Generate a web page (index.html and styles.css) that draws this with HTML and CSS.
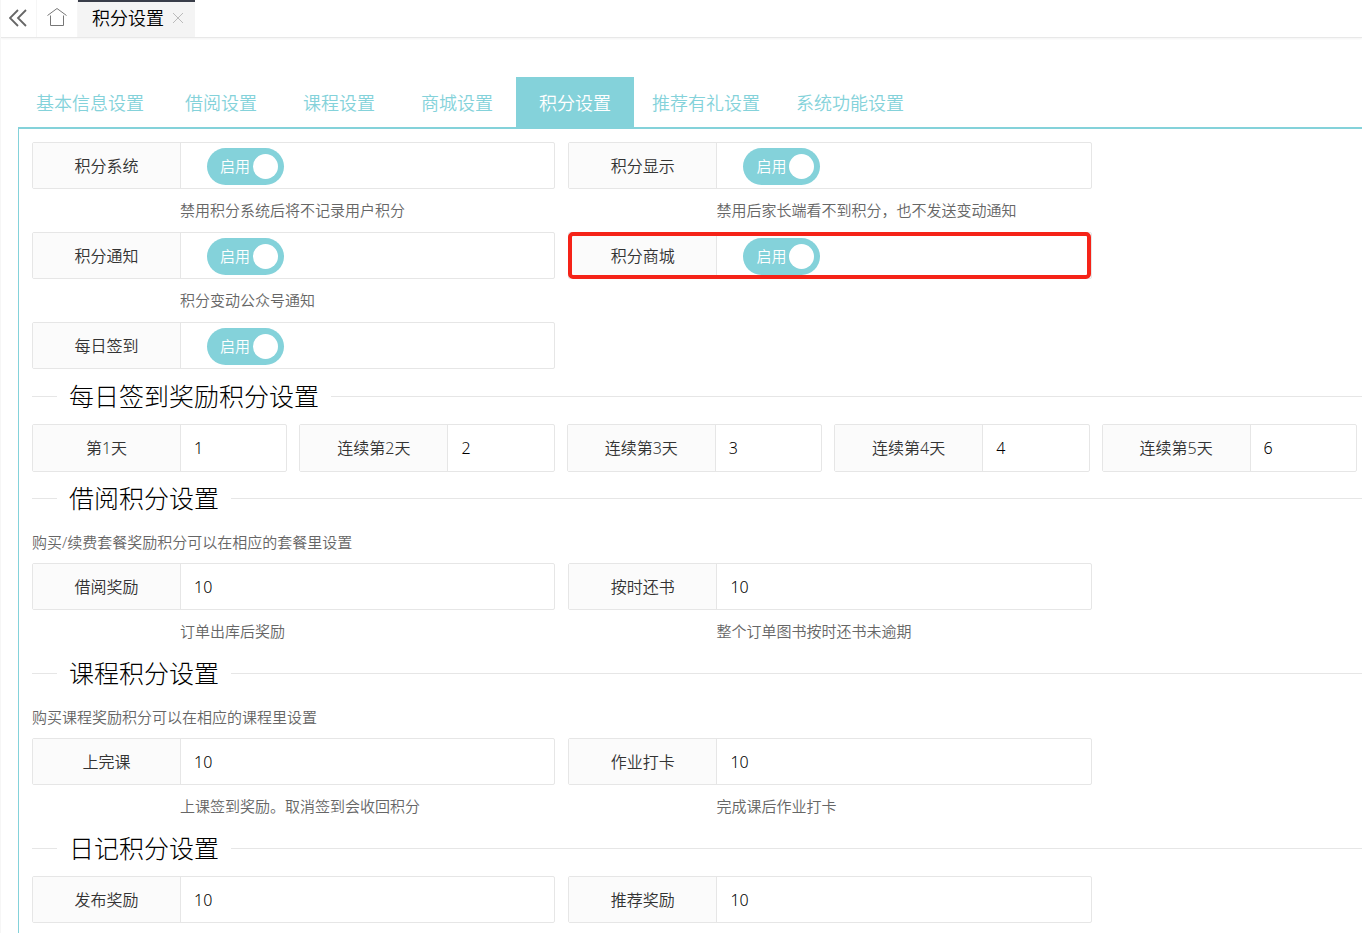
FILE: index.html
```html
<!DOCTYPE html>
<html lang="zh-CN">
<head>
<meta charset="utf-8">
<meta name="viewport" content="width=device-width, initial-scale=1">
<title>积分设置</title>
<link rel="stylesheet" href="styles.css">
</head>
<body>
<header class="topbar">
  <button class="icon-btn icon-btn-collapse" type="button" aria-label="收起菜单">
    <svg width="18" height="20" viewBox="0 0 18 20" fill="none" stroke="#666" stroke-width="1.8"><path d="M9 2L1 10l8 8M17 2L9 10l8 8"/></svg>
  </button>
  <button class="icon-btn icon-btn-home" type="button" aria-label="首页">
    <svg width="20" height="20" viewBox="0 0 20 20" fill="none" stroke="#777" stroke-width="1"><path d="M.5 8.500L10 1.500l9.500 7M3.500 8.500v10h13v-10"/></svg>
  </button>
  <div class="page-tab">
    <span>积分设置</span>
    <button class="tab-close" type="button" aria-label="关闭">
      <svg width="10" height="10" viewBox="0 0 10 10" fill="none" stroke="#bbb"><path d="M0 0l10 10M10 0L0 10"/></svg>
    </button>
  </div>
</header>
<main class="content">
  <nav class="tabs">
    <a class="tab" href="#basic">基本信息设置</a>
    <a class="tab" href="#borrow">借阅设置</a>
    <a class="tab" href="#course">课程设置</a>
    <a class="tab" href="#mall">商城设置</a>
    <a class="tab tab-active" href="#points" aria-current="page">积分设置</a>
    <a class="tab" href="#referral">推荐有礼设置</a>
    <a class="tab" href="#system">系统功能设置</a>
  </nav>
  <form class="panel">
    <div class="pairs">
      <div class="item">
        <div class="field"><label class="field-label" for="s1">积分系统</label><div class="field-body"><span class="switch"><input type="checkbox" id="s1" checked><span class="switch-text">启用</span></span></div></div>
        <p class="help">禁用积分系统后将不记录用户积分</p>
      </div>
      <div class="item">
        <div class="field"><label class="field-label" for="s2">积分显示</label><div class="field-body"><span class="switch"><input type="checkbox" id="s2" checked><span class="switch-text">启用</span></span></div></div>
        <p class="help">禁用后家长端看不到积分，也不发送变动通知</p>
      </div>
      <div class="item">
        <div class="field"><label class="field-label" for="s3">积分通知</label><div class="field-body"><span class="switch"><input type="checkbox" id="s3" checked><span class="switch-text">启用</span></span></div></div>
        <p class="help">积分变动公众号通知</p>
      </div>
      <div class="item">
        <div class="field field-marked"><label class="field-label" for="s4">积分商城</label><div class="field-body"><span class="switch"><input type="checkbox" id="s4" checked><span class="switch-text">启用</span></span></div></div>
      </div>
      <div class="item">
        <div class="field"><label class="field-label" for="s5">每日签到</label><div class="field-body"><span class="switch"><input type="checkbox" id="s5" checked><span class="switch-text">启用</span></span></div></div>
      </div>
    </div>

    <h2 class="section section-spaced">每日签到奖励积分设置</h2>
    <div class="days">
      <div class="field field-day"><label class="field-label" for="d1">第1天</label><input class="field-input" id="d1" value="1"></div>
      <div class="field field-day"><label class="field-label" for="d2">连续第2天</label><input class="field-input" id="d2" value="2"></div>
      <div class="field field-day"><label class="field-label" for="d3">连续第3天</label><input class="field-input" id="d3" value="3"></div>
      <div class="field field-day"><label class="field-label" for="d4">连续第4天</label><input class="field-input" id="d4" value="4"></div>
      <div class="field field-day"><label class="field-label" for="d5">连续第5天</label><input class="field-input" id="d5" value="6"></div>
    </div>

    <h2 class="section">借阅积分设置</h2>
    <p class="desc">购买/续费套餐奖励积分可以在相应的套餐里设置</p>
    <div class="pairs">
      <div class="item">
        <div class="field"><label class="field-label" for="b1">借阅奖励</label><input class="field-input" id="b1" value="10"></div>
        <p class="help">订单出库后奖励</p>
      </div>
      <div class="item">
        <div class="field"><label class="field-label" for="b2">按时还书</label><input class="field-input" id="b2" value="10"></div>
        <p class="help">整个订单图书按时还书未逾期</p>
      </div>
    </div>

    <h2 class="section">课程积分设置</h2>
    <p class="desc">购买课程奖励积分可以在相应的课程里设置</p>
    <div class="pairs">
      <div class="item">
        <div class="field"><label class="field-label" for="c1">上完课</label><input class="field-input" id="c1" value="10"></div>
        <p class="help">上课签到奖励。取消签到会收回积分</p>
      </div>
      <div class="item">
        <div class="field"><label class="field-label" for="c2">作业打卡</label><input class="field-input" id="c2" value="10"></div>
        <p class="help">完成课后作业打卡</p>
      </div>
    </div>

    <h2 class="section">日记积分设置</h2>
    <div class="pairs">
      <div class="item">
        <div class="field"><label class="field-label" for="n1">发布奖励</label><input class="field-input" id="n1" value="10"></div>
      </div>
      <div class="item">
        <div class="field"><label class="field-label" for="n2">推荐奖励</label><input class="field-input" id="n2" value="10"></div>
      </div>
    </div>
  </form>
</main>
</body>
</html>
```

FILE: styles.css
```css
* {
  box-sizing: border-box;
}

body {
  margin: 0;
  min-height: 100vh;
  display: flex;
  flex-direction: column;
  border-left: 1px solid #f6f6f6;
  background: #fff;
  color: #333;
  font-family: "Noto Sans", "Noto Sans CJK SC", sans-serif;
  font-weight: 350;
  font-size: 16px;
}

button,
input {
  font: inherit;
  color: inherit;
}

.topbar {
  display: flex;
  height: 38px;
  border-bottom: 1px solid #e8e8e8;
  box-shadow: 0 1px 2px rgba(0, 0, 0, 0.05);
}

.icon-btn {
  display: flex;
  align-items: center;
  justify-content: center;
  padding: 0 0 2px;
  border: 0;
  border-right: 1px solid #f6f6f6;
  background: none;
}

.icon-btn-collapse {
  width: 36px;
  padding: 0 2px 1px 0;
}

.icon-btn-home {
  width: 41px;
  padding-bottom: 4px;
}

.page-tab {
  display: flex;
  align-items: center;
  gap: 9px;
  padding: 0 12px 4px 14px;
  border-top: 2px solid #393d49;
  background: #f4f4f4;
  color: #000;
  font-size: 18px;
  line-height: 30px;
}

.tab-close {
  display: flex;
  padding: 0;
  border: 0;
  background: none;
}

.content {
  flex: 1;
  display: flex;
  flex-direction: column;
  padding: 39px 0 0 17px;
}

.tabs {
  display: flex;
  border-bottom: 2px solid #84d2da;
}

.tab {
  min-width: 118px;
  padding: 2px 18px 0;
  color: #84d2da;
  font-size: 18px;
  line-height: 48px;
  text-align: center;
  text-decoration: none;
}

.tab-active {
  background: #84d2da;
  color: #fff;
}

.panel {
  flex: 1;
  padding: 13px 0 9px 13px;
  border-left: 1px solid #84d2da;
}

.pairs {
  display: grid;
  grid-template-columns: repeat(2, 39.5%);
  column-gap: 13px;
  margin-right: 5px;
}

.days {
  display: grid;
  grid-template-columns: repeat(5, minmax(0, 1fr));
  column-gap: 12px;
  margin: 0 5px 6px 0;
}

.field {
  position: relative;
  display: flex;
  height: 47px;
  border: 1px solid #e6e6e6;
  border-radius: 2px;
}

.field-day {
  height: 48px;
}

.field-label {
  flex: none;
  display: flex;
  align-items: center;
  justify-content: center;
  width: 148px;
  padding-bottom: 2px;
  border-right: 1px solid #e6e6e6;
  background: #fbfbfb;
}

.field-body {
  display: flex;
  align-items: center;
  padding: 2px 0 0 26px;
}

.field-input {
  flex: 1;
  min-width: 0;
  padding: 0 13px;
  border: 0;
  background: none;
  color: #000;
}

.field-marked::after {
  content: "";
  position: absolute;
  inset: -1px 0 -1px -1px;
  border: 4px solid #f52318;
  border-radius: 5px;
  pointer-events: none;
}

.switch {
  position: relative;
  display: flex;
}

.switch input {
  appearance: none;
  display: flex;
  align-items: center;
  justify-content: flex-end;
  width: 77px;
  height: 37px;
  margin: 0;
  padding: 0 6px;
  border-radius: 19px;
  background: #84d2da;
}

.switch input::before {
  content: "";
  width: 25px;
  height: 25px;
  border-radius: 50%;
  background: #fff;
}

.switch input:not(:checked) {
  justify-content: flex-start;
  background: #d2d2d2;
}

.switch-text {
  position: absolute;
  left: 13px;
  top: 0;
  color: #fff;
  font-size: 15px;
  line-height: 37px;
  pointer-events: none;
}

.help {
  margin: 0 0 0 148px;
  color: #666;
  font-size: 15px;
  line-height: 43px;
}

.section {
  display: flex;
  align-items: center;
  gap: 12px;
  margin: 0 0 8px;
  color: #000;
  font-size: 25px;
  font-weight: 300;
  line-height: 40px;
}

.section-spaced {
  margin-top: 7px;
}

.section::before,
.section::after {
  content: "";
  width: 25px;
  height: 1px;
  background: #e6e6e6;
}

.section::after {
  flex: 1;
}

.desc {
  margin: 0;
  padding: 5px 0 10px;
  color: #666;
  font-size: 15px;
  line-height: 22px;
}
```
